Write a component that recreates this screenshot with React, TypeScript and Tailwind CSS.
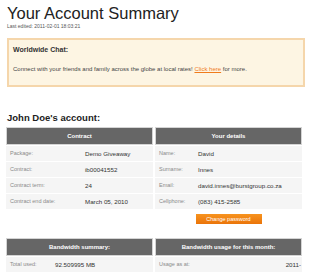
const rowsLeft = [
  ['Package:', 'Demo Giveaway'],
  ['Contract:', 'ib00041552'],
  ['Contract term:', '24'],
  ['Contract end date:', 'March 05, 2010'],
];

const rowsRight = [
  ['Name:', 'David'],
  ['Surname:', 'Innes'],
  ['Email:', 'david.innes@burstgroup.co.za'],
  ['Cellphone:', '(083) 415-2585'],
];

function Header({ title }: { title: string }) {
  return (
    <div className="h-[18px] flex items-center justify-center bg-[#666666] border border-[#d4d4d4] text-white font-bold text-[6px]">
      {title}
    </div>
  );
}

function Row({ label, value, labelW }: { label: string; value: string; labelW: string }) {
  return (
    <div className="flex items-center h-[15px] mt-px bg-[#f5f5f5] whitespace-nowrap">
      <span className={`${labelW} shrink-0 pl-[4px] text-[5.5px] text-[#8a8a8a]`}>{label}</span>
      <span className="text-[6.2px] text-[#333]">{value}</span>
    </div>
  );
}

export default function App() {
  return (
    <div className="w-[310px] h-[274px] overflow-hidden bg-white font-['Liberation_Sans',Arial,sans-serif]">
      <div className="pl-[7px] pt-[4px]">
        <h1 className="text-[16.5px] leading-[19px] text-[#222]">Your Account Summary</h1>
        <p className="text-[5px] leading-[6px] text-[#555]">Last edited: 2011-02-01 18:03:21</p>
      </div>

      <div className="ml-[7px] w-[298px] mt-[9px] h-[49px] border-2 border-[#f5d6ab] bg-[#fdf5e3] px-[4px] pt-[5px]">
        <div className="text-[7px] font-bold text-[#333]">Worldwide Chat:</div>
        <div className="mt-[9px] text-[6px] text-[#444] whitespace-nowrap">
          Connect with your friends and family across the globe at local rates!{' '}
          <span className="text-[#f07b1c] underline">Click here</span> for more.
        </div>
      </div>

      <h2 className="ml-[7px] mt-[25px] text-[9.5px] leading-[12px] font-bold text-[#222]">John Doe's account:</h2>

      <div className="ml-[6px] mt-[3px] grid grid-cols-[147px_147px] gap-x-[2px]">
        <div>
          <Header title="Contract" />
          {rowsLeft.map(([l, v]) => (
            <Row key={l} label={l} value={v} labelW="w-[79px]" />
          ))}
        </div>
        <div>
          <Header title="Your details" />
          {rowsRight.map(([l, v]) => (
            <Row key={l} label={l} value={v} labelW="w-[43px]" />
          ))}
          <div className="flex justify-center pt-[5px]">
            <button className="w-[66px] h-[10px] bg-gradient-to-b from-[#f7931e] to-[#ea7408] text-white text-[5.5px] leading-[10px]">
              Change password
            </button>
          </div>
        </div>
      </div>

      <div className="ml-[6px] mt-[14px] grid grid-cols-[147px_147px] gap-x-[2px]">
        <div>
          <Header title="Bandwidth summary:" />
          <Row label="Total used:" value="92.509995 MB" labelW="w-[49px]" />
        </div>
        <div>
          <Header title="Bandwidth usage for this month:" />
          <div className="flex items-center justify-between h-[15px] mt-px bg-[#f5f5f5] whitespace-nowrap">
            <span className="pl-[4px] text-[5.5px] text-[#8a8a8a]">Usage as at:</span>
            <span className="pr-px text-[6.2px] text-[#333]">2011-</span>
          </div>
        </div>
      </div>
    </div>
  );
}
